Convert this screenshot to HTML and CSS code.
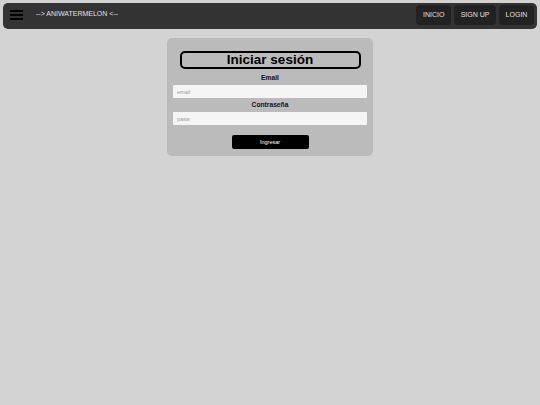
FILE: index.html
```html
<!DOCTYPE html>
<html lang="es">
<head>
<meta charset="utf-8">
<title>AniWatermelon</title>
<link rel="stylesheet" href="styles.css">
</head>
<body>
<nav class="navbar">
  <div class="menu-icon"><span></span><span></span><span></span></div>
  <div class="brand">--&gt; ANIWATERMELON &lt;--</div>
  <div class="nav-links">
    <a class="nav-btn" href="#">INICIO</a>
    <a class="nav-btn" href="#">SIGN UP</a>
    <a class="nav-btn" href="#">LOGIN</a>
  </div>
</nav>
<main class="card">
  <h1 class="title">Iniciar sesión</h1>
  <label class="label">Email</label>
  <input class="field" type="text" placeholder="email">
  <label class="label label-pass">Contraseña</label>
  <input class="field" type="password" placeholder="pasw">
  <button class="submit">Ingresar</button>
</main>
</body>
</html>
```

FILE: styles.css
```css
html, body {
  margin: 0;
  padding: 0;
  background: #d3d3d3;
  font-family: "Liberation Sans", Arial, sans-serif;
}
body {
  padding-top: 3px;
}
.navbar {
  margin: 0 3px;
  height: 26px;
  background: #333333;
  border-radius: 5px;
  display: flex;
  align-items: flex-start;
  padding: 0 3px 0 7px;
  box-sizing: border-box;
}
.menu-icon {
  margin-top: 7px;
  width: 13px;
  display: flex;
  flex-direction: column;
  gap: 2px;
}
.menu-icon span {
  display: block;
  height: 2px;
  background: #000;
}
.brand {
  margin-left: 13px;
  margin-top: 6.5px;
  font-size: 7px;
  line-height: 8px;
  color: #e0e0e0;
}
.nav-links {
  margin-left: auto;
  margin-top: 2px;
  display: flex;
  gap: 3px;
}
.nav-btn {
  display: block;
  height: 20px;
  line-height: 20px;
  padding: 0 6.6px;
  background: #222222;
  border-radius: 4px;
  color: #e0e0e0;
  font-size: 7px;
  text-decoration: none;
}
.card {
  width: 206px;
  margin: 9px auto 0;
  background: #bbbbbb;
  border-radius: 5px;
  padding: 13px 6px 7px;
  box-sizing: border-box;
  display: flex;
  flex-direction: column;
  align-items: center;
}
.title {
  margin: 0;
  width: 181px;
  height: 18px;
  box-sizing: border-box;
  border: 2px solid #000;
  border-radius: 5px;
  font-size: 13.5px;
  line-height: 14px;
  text-align: center;
  color: #000;
}
.label {
  margin-top: 5px;
  font-size: 6.7px;
  line-height: 8px;
  font-weight: bold;
  color: #111;
}
.label-pass {
  margin-top: 3px;
}
.field {
  margin-top: 3px;
  width: 194px;
  height: 13px;
  box-sizing: border-box;
  border: none;
  border-radius: 1px;
  background: #f5f5f5;
  padding: 0 4px;
  font-family: "Liberation Sans", Arial, sans-serif;
  font-size: 5.5px;
  outline: none;
}
.field::placeholder {
  color: #9a9a9a;
}
.submit {
  margin-top: 10px;
  width: 77px;
  height: 14px;
  border: none;
  border-radius: 2px;
  background: #000;
  color: #fff;
  font-family: "Liberation Sans", Arial, sans-serif;
  font-size: 5.5px;
  padding: 0;
}
```
